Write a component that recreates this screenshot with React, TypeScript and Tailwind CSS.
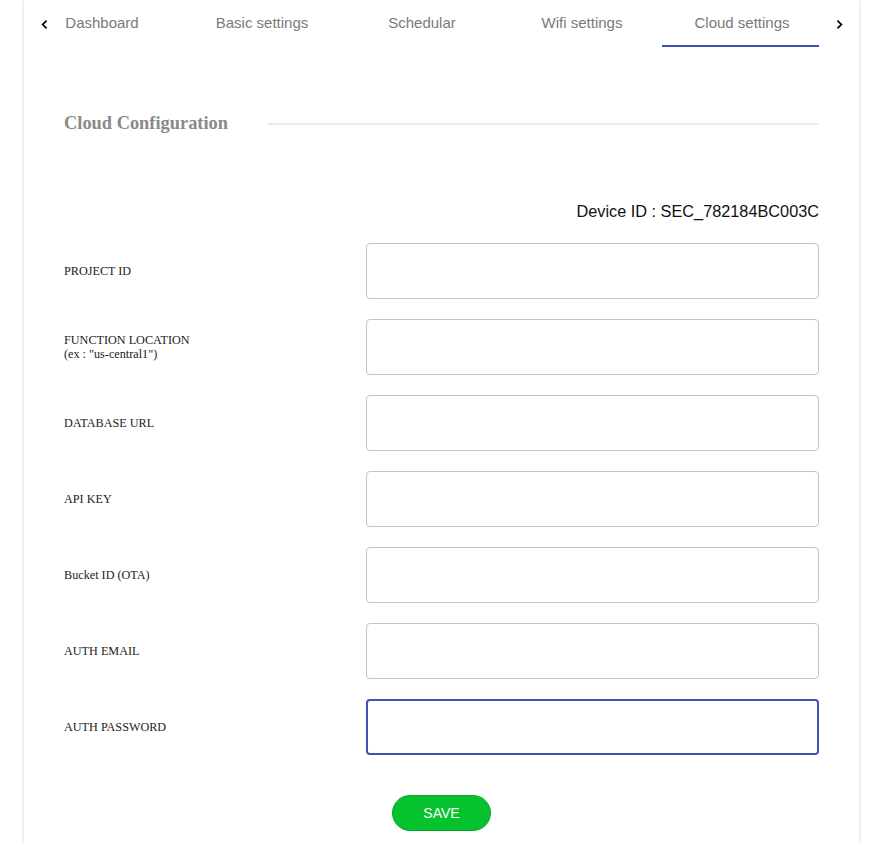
import { ReactElement } from 'react';

const tabs = ['Dashboard', 'Basic settings', 'Schedular', 'Wifi settings', 'Cloud settings'];

const fields: { label: string; hint?: string; focused?: boolean }[] = [
  { label: 'PROJECT ID' },
  { label: 'FUNCTION LOCATION', hint: '(ex : "us-central1")' },
  { label: 'DATABASE URL' },
  { label: 'API KEY' },
  { label: 'Bucket ID (OTA)' },
  { label: 'AUTH EMAIL' },
  { label: 'AUTH PASSWORD', focused: true },
];

function Chevron({ dir }: { dir: 'left' | 'right' }) {
  return (
    <svg width="17" height="17" viewBox="0 0 24 24" fill="currentColor" stroke="currentColor" strokeWidth="0.6">
      {dir === 'left' ? (
        <path d="M15.41 16.59 10.83 12l4.58-4.59L14 6l-6 6 6 6z" />
      ) : (
        <path d="M8.59 16.59 13.17 12 8.59 7.41 10 6l6 6-6 6z" />
      )}
    </svg>
  );
}

export default function App(): ReactElement {
  return (
    <div className="min-h-[844px] bg-white" style={{ fontFamily: '"Liberation Sans", Arial, sans-serif' }}>
      <div className="mx-[24px] w-[835px] min-h-[844px] bg-white shadow-[0_0_4px_rgba(0,0,0,0.18)]">
        {/* tab bar */}
        <div className="flex h-[48px] items-stretch">
          <button className="flex w-[40px] items-center justify-center text-black">
            <Chevron dir="left" />
          </button>
          <div className="relative w-[755px] overflow-hidden">
            <div className="flex ml-[-42px]">
              {tabs.map((t, i) => (
                <div
                  key={t}
                  className="relative flex h-[46px] w-[160px] shrink-0 items-center justify-center text-[15px] text-[#7a7a7a]"
                >
                  {t}
                  {i === tabs.length - 1 && (
                    <span className="absolute bottom-[-1px] left-0 right-0 h-[2px] bg-[#3f51b5]" />
                  )}
                </div>
              ))}
            </div>
          </div>
          <button className="flex w-[40px] items-center justify-center text-black">
            <Chevron dir="right" />
          </button>
        </div>

        <div className="px-[40px]">
          <div className="mt-[62px] flex items-center gap-[40px]">
            <h2
              className="text-[18.4px] font-bold text-[#8a8a8a]"
              style={{ fontFamily: '"Liberation Serif", "Times New Roman", serif' }}
            >
              Cloud Configuration
            </h2>
            <div className="h-[2px] flex-1 bg-[#ebebeb]" />
          </div>

          <div className="mt-[61px] text-right text-[16.3px] text-[#111]">Device ID : SEC_782184BC003C</div>

          <div className="mt-[20px] flex flex-col gap-[20px]">
            {fields.map((f) => (
              <div key={f.label} className="flex items-center">
                <div
                  className="w-[302px] text-[12.2px] leading-[14px] text-[#222]"
                  style={{ fontFamily: '"Liberation Serif", "Times New Roman", serif' }}
                >
                  <div>{f.label}</div>
                  {f.hint && <div>{f.hint}</div>}
                </div>
                <div
                  className={
                    f.focused
                      ? 'h-[56px] flex-1 rounded-[4px] border-2 border-[#3f51b5]'
                      : 'h-[56px] flex-1 rounded-[4px] border border-[#c4c4c4]'
                  }
                />
              </div>
            ))}
          </div>

          <div className="mt-[40px] flex justify-center">
            <button className="h-[36px] w-[99px] rounded-full border border-[#0aa52b] bg-[#05c22e] text-[14px] text-white">
              SAVE
            </button>
          </div>
        </div>
      </div>
    </div>
  );
}
